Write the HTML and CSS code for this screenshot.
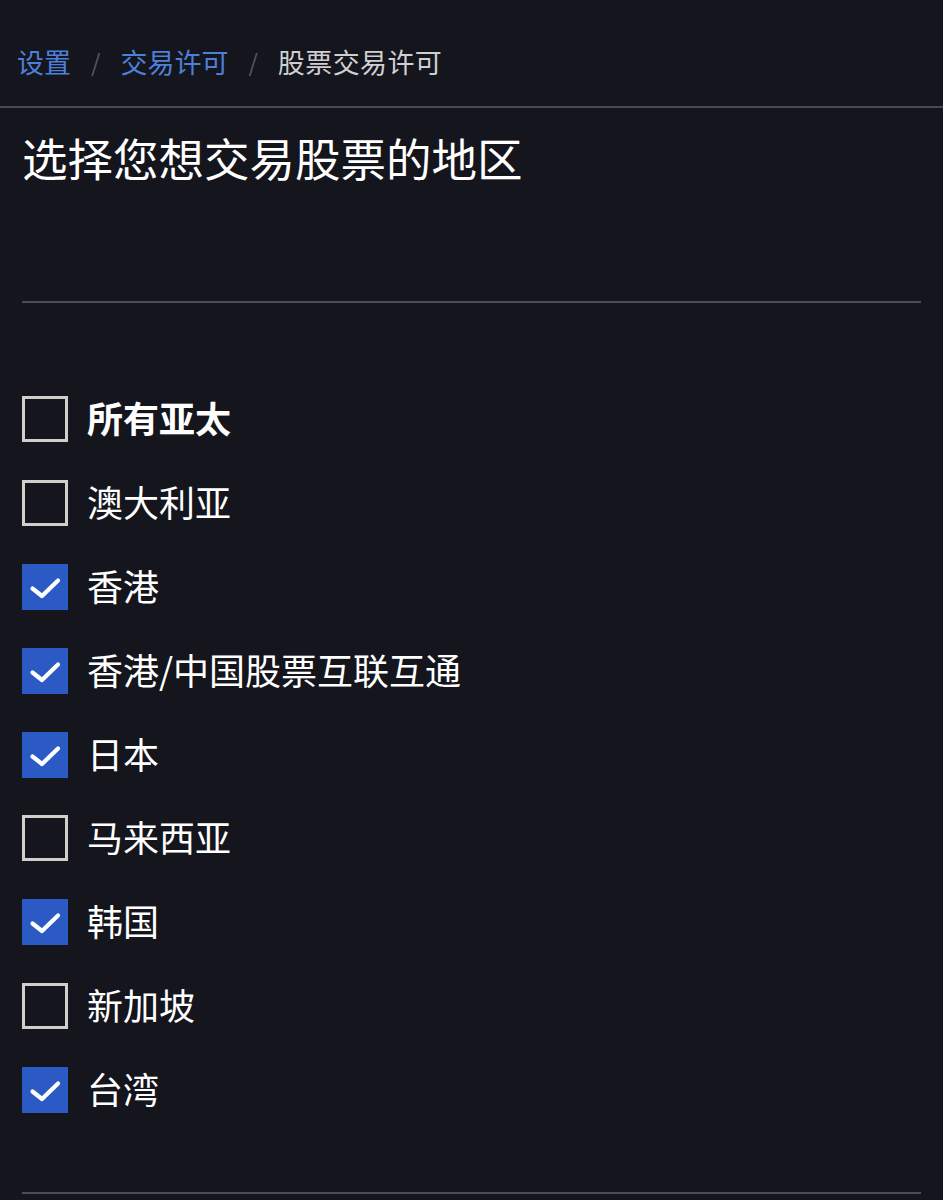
FILE: index.html
```html
<!DOCTYPE html>
<html lang="zh-CN">
<head>
<meta charset="utf-8">
<title>股票交易许可</title>
<link rel="stylesheet" href="styles.css">
</head>
<body>
<nav class="crumbs">
  <a class="crumb link">设置</a><span class="sep">/</span><a class="crumb link">交易许可</a><span class="sep">/</span><span class="crumb current">股票交易许可</span>
</nav>
<main class="content">
  <section class="intro">
    <h1 class="title">选择您想交易股票的地区</h1>
  </section>
  <ul class="regions">
    <li class="region all"><span class="box"></span><span class="label">所有亚太</span></li>
    <li class="region"><span class="box"></span><span class="label">澳大利亚</span></li>
    <li class="region checked"><span class="box"><svg viewBox="0 0 46 46"><path d="M10.5 24.5 L20 32 L36 16.5"/></svg></span><span class="label">香港</span></li>
    <li class="region checked"><span class="box"><svg viewBox="0 0 46 46"><path d="M10.5 24.5 L20 32 L36 16.5"/></svg></span><span class="label">香港/中国股票互联互通</span></li>
    <li class="region checked"><span class="box"><svg viewBox="0 0 46 46"><path d="M10.5 24.5 L20 32 L36 16.5"/></svg></span><span class="label">日本</span></li>
    <li class="region"><span class="box"></span><span class="label">马来西亚</span></li>
    <li class="region checked"><span class="box"><svg viewBox="0 0 46 46"><path d="M10.5 24.5 L20 32 L36 16.5"/></svg></span><span class="label">韩国</span></li>
    <li class="region"><span class="box"></span><span class="label">新加坡</span></li>
    <li class="region checked"><span class="box"><svg viewBox="0 0 46 46"><path d="M10.5 24.5 L20 32 L36 16.5"/></svg></span><span class="label">台湾</span></li>
  </ul>
</main>
</body>
</html>
```
FILE: styles.css
```css
html, body {
  margin: 0;
  padding: 0;
  background: #14151d;
}
body {
  font-family: "Noto Sans CJK SC", "Noto Sans", sans-serif;
  color: #ffffff;
  width: 943px;
  min-height: 1200px;
}
.crumbs {
  display: flex;
  align-items: center;
  height: 108px;
  padding: 18px 0 0 17px;
  box-sizing: border-box;
  border-bottom: 2px solid #484a53;
  font-size: 27px;
  line-height: 38px;
}
.crumb.link { color: #4d80d8; }
.crumb.current { color: #cfcfd2; letter-spacing: 0.4px; }
.sep {
  color: #55575f;
  padding: 0 20px;
  font-size: 24px;
}
.content {
  padding: 0 22px;
}
.intro {
  border-bottom: 2px solid #4c4e57;
  height: 195px;
  box-sizing: border-box;
  padding-top: 22px;
}
.title {
  margin: 0;
  font-weight: 400;
  font-size: 45.5px;
  line-height: 54px;
}
.regions {
  list-style: none;
  margin: 0;
  padding: 74px 0 60px;
  border-bottom: 2px solid #4c4e57;
}
.region {
  display: flex;
  align-items: center;
  height: 83.9px;
  gap: 19px;
}
.box {
  width: 46px;
  height: 46px;
  box-sizing: border-box;
  border: 3.5px solid #d2cfca;
  flex: none;
  display: flex;
}
.region.checked .box {
  background: #2c5ac4;
  border: none;
}
.box svg {
  width: 46px;
  height: 46px;
}
.box svg path {
  fill: none;
  stroke: #ffffff;
  stroke-width: 4.2;
  stroke-linecap: round;
  stroke-linejoin: round;
}
.label {
  font-size: 36px;
  line-height: 46px;
  color: #ffffff;
  padding-bottom: 4px;
}
.region.all .label {
  font-weight: 700;
}
```
